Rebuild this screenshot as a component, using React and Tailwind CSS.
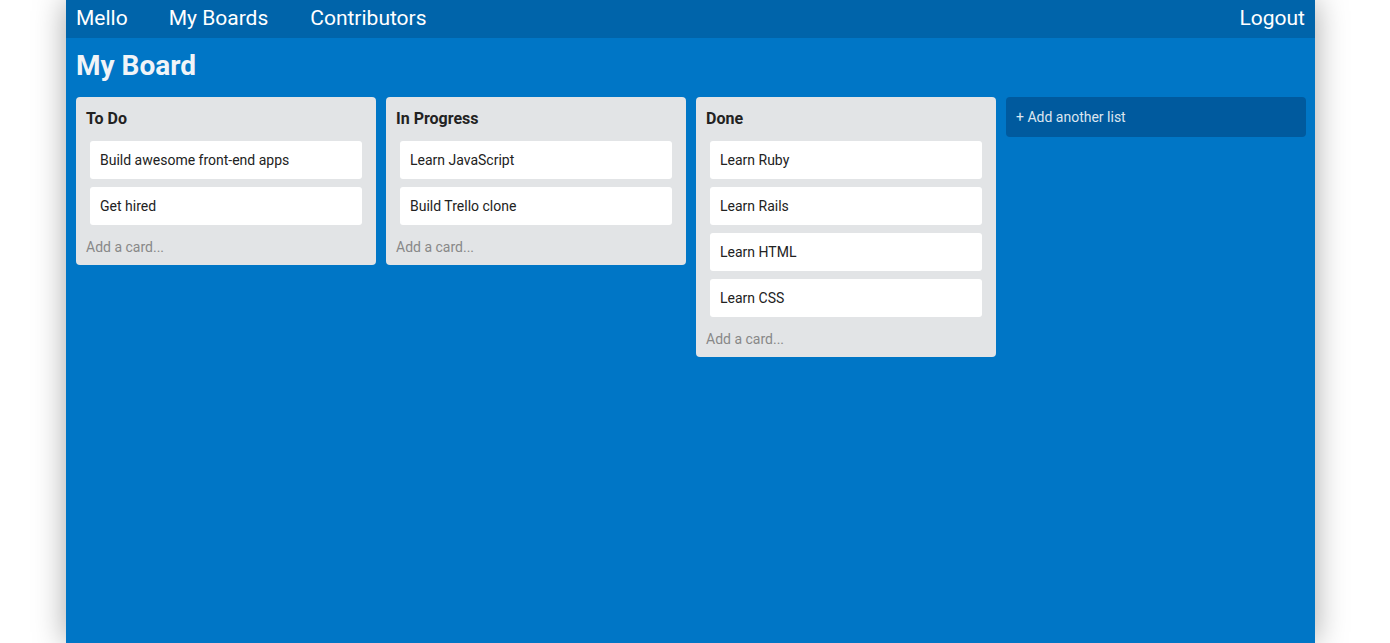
import React from "react";

const lists = [
  { title: "To Do", cards: ["Build awesome front-end apps", "Get hired"] },
  { title: "In Progress", cards: ["Learn JavaScript", "Build Trello clone"] },
  { title: "Done", cards: ["Learn Ruby", "Learn Rails", "Learn HTML", "Learn CSS"] },
];

function List({ title, cards }) {
  return (
    <div className="w-[300px] shrink-0 rounded-[4px] bg-[#e2e4e6] px-[10px] pt-[11px] pb-[9px]">
      <h2 className="text-[16px] leading-[22px] font-bold text-[#222]">{title}</h2>
      <div className="mt-[11px] flex flex-col gap-[8px] px-[4px]">
        {cards.map((c) => (
          <div
            key={c}
            className="h-[38px] flex items-center rounded-[3px] bg-white px-[10px] text-[14px] text-[#222]"
          >
            {c}
          </div>
        ))}
      </div>
      <div className="mt-[13px] text-[14px] leading-[18px] text-[#888]">Add a card...</div>
    </div>
  );
}

export default function App() {
  return (
    <div
      className="min-h-screen bg-white"
      style={{ fontFamily: "Roboto, 'Liberation Sans', sans-serif" }}
    >
      <div className="ml-[66px] w-[1249px] min-h-[643px] bg-[#0076c6] shadow-[0_0_30px_rgba(0,0,0,0.35)]">
        <nav className="h-[38px] bg-[#0064aa] px-[10px] pb-[2px] flex items-center text-white text-[21px] leading-[24px]">
          <a className="mr-[41px]">Mello</a>
          <a className="mr-[42px]">My Boards</a>
          <a>Contributors</a>
          <a className="ml-auto">Logout</a>
        </nav>
        <div className="px-[10px]">
          <h1 className="pt-[9px] text-[28px] leading-[38px] font-bold text-[#f0f4f8]">My Board</h1>
          <div className="mt-[12px] flex items-start gap-[10px]">
            {lists.map((l) => (
              <List key={l.title} {...l} />
            ))}
            <div className="w-[300px] h-[40px] shrink-0 rounded-[4px] bg-[#005a9e] px-[10px] flex items-center text-[14px] text-[#dce6f0]">
              + Add another list
            </div>
          </div>
        </div>
      </div>
    </div>
  );
}
